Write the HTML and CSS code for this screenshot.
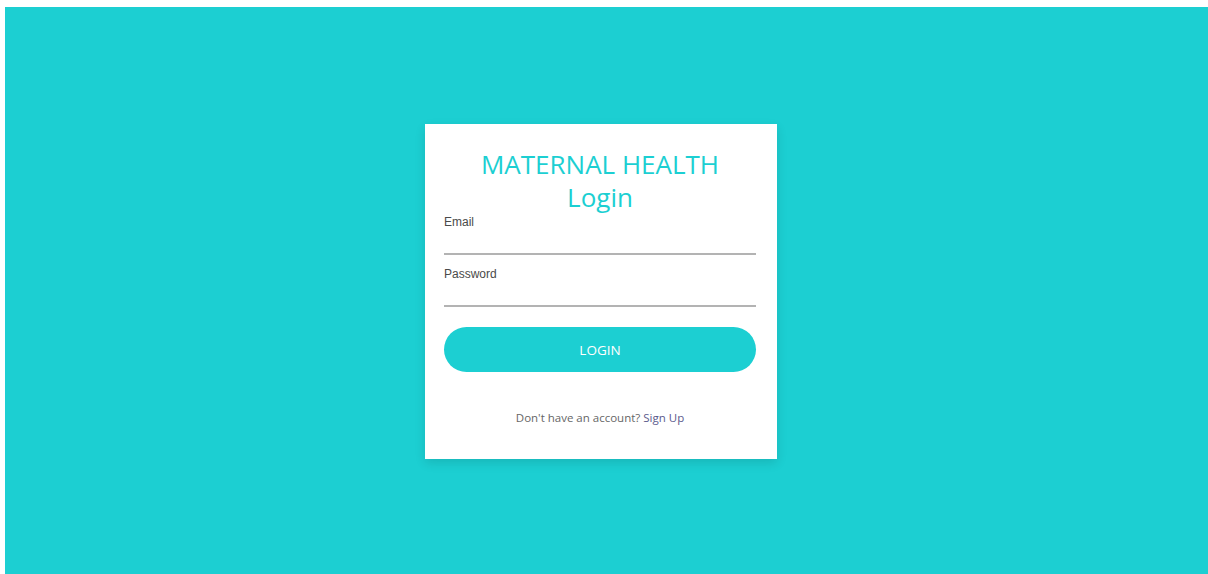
FILE: index.html
```html
<!DOCTYPE html>
<html lang="en">
<head>
<meta charset="utf-8">
<title>Maternal Health - Login</title>
<link rel="stylesheet" href="styles.css">
</head>
<body>
<main class="screen">
  <form class="card">
    <h1 class="title">MATERNAL HEALTH<br>Login</h1>
    <label class="field">
      <span class="field-label">Email</span>
      <input class="field-input" type="email">
    </label>
    <label class="field">
      <span class="field-label">Password</span>
      <input class="field-input" type="password">
    </label>
    <button class="login-btn" type="button">LOGIN</button>
    <p class="signup">Don't have an account? <a href="#" class="signup-link">Sign Up</a></p>
  </form>
</main>
</body>
</html>
```
FILE: styles.css
```css
html, body {
  margin: 0;
  height: 100%;
  background: #ffffff;
}
body {
  padding: 7px 0 0 5px;
  box-sizing: border-box;
}
.screen {
  height: 100%;
  background: #1ccfd2;
  display: flex;
  justify-content: center;
  align-items: flex-start;
  padding: 117px 11px 0 0;
  box-sizing: border-box;
}
.card {
  width: 352px;
  height: 335px;
  box-sizing: border-box;
  background: #ffffff;
  padding: 24px 21px 0 19px;
  box-shadow: 0 4px 10px rgba(0, 0, 0, 0.12);
  display: flex;
  flex-direction: column;
}
.title {
  margin: 0 0 1px;
  font-family: "Open Sans", sans-serif;
  font-weight: 400;
  font-size: 26px;
  line-height: 33px;
  color: #1ccfd2;
  text-align: center;
}
.field {
  display: flex;
  flex-direction: column;
  font-family: "Liberation Sans", Arial, sans-serif;
}
.field-label {
  font-size: 12px;
  line-height: 14px;
  color: #4a4a4a;
}
.field-input {
  border: none;
  border-bottom: 2px solid #b3b3b3;
  height: 24px;
  padding: 0;
  margin: 0 0 12px;
  outline: none;
  background: transparent;
}
.login-btn {
  margin-top: 8px;
  height: 45px;
  border: none;
  border-radius: 23px;
  background: #1ccfd2;
  color: #ffffff;
  font-family: "Open Sans", sans-serif;
  font-size: 13.5px;
}
.signup {
  margin: 38px 0 0;
  text-align: center;
  font-family: "Open Sans", sans-serif;
  font-size: 11.5px;
  color: #666666;
}
.signup-link {
  color: #5b5a8c;
  text-decoration: none;
}
```
